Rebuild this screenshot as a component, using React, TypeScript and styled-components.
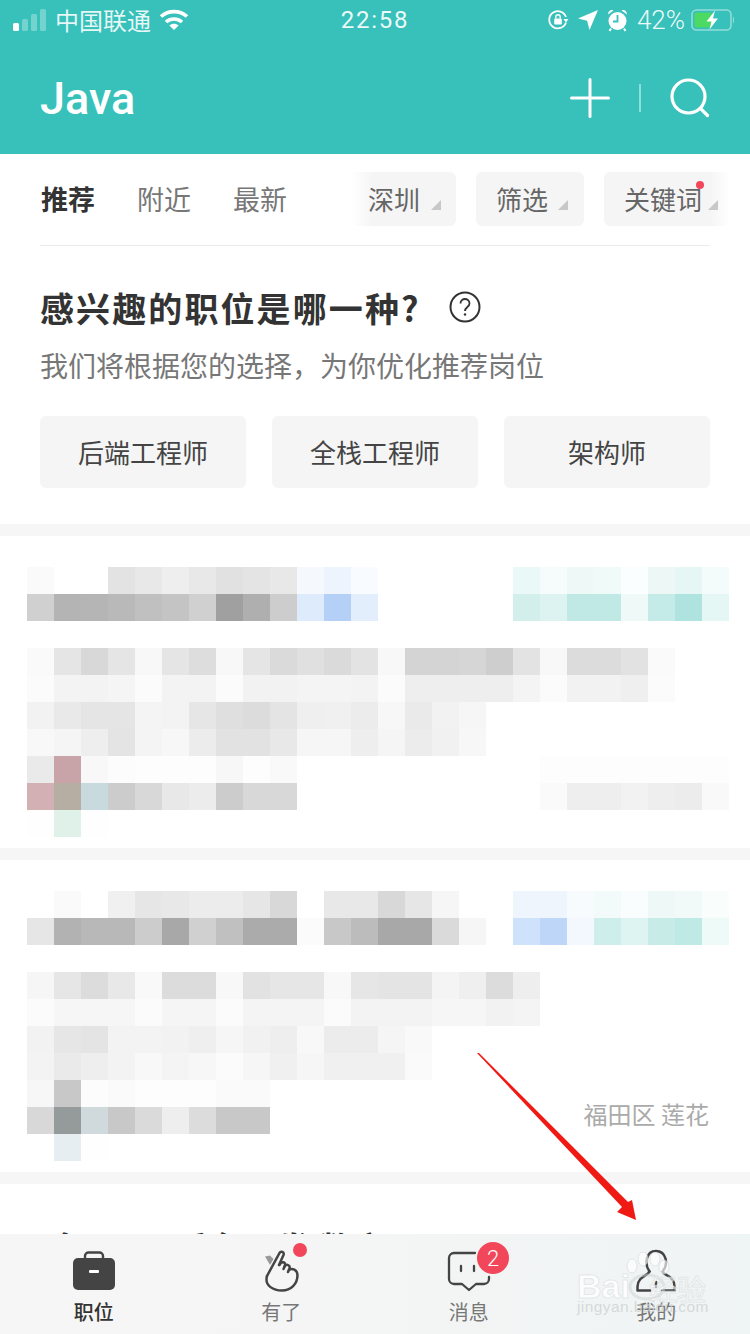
import styled, { createGlobalStyle } from "styled-components";

const GlobalStyle = createGlobalStyle`
  html, body {
    margin: 0;
    padding: 0;
    background: #fff;
  }
  * {
    box-sizing: border-box;
  }
`;

const Page = styled.div`
  position: relative;
  width: 750px;
  height: 1334px;
  overflow: hidden;
  background: #fff;
  font-family: "Noto Sans CJK SC", "Liberation Sans", sans-serif;
`;

const TopBlock = styled.header`
  height: 154px;
  background: #38c1ba;
  color: #fff;
`;

const StatusBar = styled.div`
  display: flex;
  align-items: center;
  justify-content: space-between;
  height: 40px;
  padding: 0 15px 0 13px;
`;

const StatusSide = styled.div<{ $gap: number; $end?: boolean }>`
  display: flex;
  align-items: center;
  flex: 1;
  gap: ${(p) => p.$gap}px;
  justify-content: ${(p) => (p.$end ? "flex-end" : "flex-start")};
`;

const Carrier = styled.span`
  font-size: 24px;
  line-height: 40px;
  color: rgba(255, 255, 255, 0.88);
`;

const Clock = styled.span`
  padding-left: 2px;
  font-family: "Roboto", sans-serif;
  font-size: 24px;
  letter-spacing: 1.8px;
  color: rgba(255, 255, 255, 0.92);
`;

const Percent = styled.span`
  margin-right: -3px;
  font-family: "Roboto", sans-serif;
  font-size: 26px;
  font-weight: 300;
  color: rgba(255, 255, 255, 0.92);
`;

const NavBar = styled.div`
  display: flex;
  align-items: center;
  justify-content: space-between;
  height: 114px;
  padding: 2px 40px 0 40px;
`;

const AppTitle = styled.h1`
  margin: 0;
  font-family: "Roboto", sans-serif;
  font-size: 45px;
  font-weight: 500;
`;

const NavActions = styled.div`
  display: flex;
  align-items: center;
  gap: 29px;
`;

const NavRule = styled.i`
  display: block;
  width: 2px;
  height: 28px;
  background: rgba(255, 255, 255, 0.45);
`;

const FilterRow = styled.div`
  display: flex;
  align-items: center;
  justify-content: space-between;
  height: 91px;
  padding: 0 20px 1px 41px;
`;

const TabGroup = styled.div`
  display: flex;
  gap: 42px;
  padding-bottom: 2px;
`;

const Tab = styled.span<{ $active?: boolean }>`
  font-size: 27px;
  font-weight: ${(p) => (p.$active ? 700 : 400)};
  color: ${(p) => (p.$active ? "#333" : "#777")};
`;

const ChipGroup = styled.div`
  display: flex;
  gap: 20px;
`;

const Chip = styled.div<{ $w: number; $fade?: "left" | "right" }>`
  position: relative;
  display: flex;
  align-items: center;
  width: ${(p) => p.$w}px;
  height: 54px;
  padding: 0 0 2px ${(p) => (p.$fade === "left" ? 17 : 20)}px;
  border-radius: 6px;
  font-size: 26px;
  color: #666;
  background: ${(p) =>
    p.$fade === "left"
      ? "linear-gradient(90deg, #fff 0, #f5f5f5 22px)"
      : p.$fade === "right"
        ? "linear-gradient(270deg, #fff 0, #f5f5f5 20px)"
        : "#f5f5f5"};
`;

const ChipArrow = styled.i<{ $right: number }>`
  position: absolute;
  right: ${(p) => p.$right}px;
  bottom: 16px;
  width: 10px;
  height: 10px;
  background: #c8c8c8;
  clip-path: polygon(100% 0, 100% 100%, 0 100%);
`;

const ChipDot = styled.i`
  position: absolute;
  top: 9px;
  right: 26px;
  width: 8px;
  height: 8px;
  border-radius: 50%;
  background: #f2475b;
`;

const Rule = styled.div`
  height: 1px;
  margin: 0 40px;
  background: #ececec;
`;

const Survey = styled.section`
  display: flex;
  flex-direction: column;
  height: 278px;
  padding: 36px 40px 0;
`;

const SurveyTitle = styled.h2`
  display: flex;
  align-items: center;
  gap: 28px;
  margin: 0;
  height: 50px;
  font-size: 34px;
  font-weight: 700;
  letter-spacing: 2.1px;
  color: #333;
`;

const SurveyHint = styled.p`
  margin: 11px 0 0;
  font-size: 28px;
  line-height: 44px;
  color: #777;
`;

const OptionRow = styled.div`
  display: grid;
  grid-template-columns: repeat(3, 206px);
  gap: 26px;
  margin-top: 29px;
`;

const OptionButton = styled.div`
  display: flex;
  align-items: center;
  justify-content: center;
  height: 72px;
  padding-bottom: 2px;
  border-radius: 6px;
  background: #f5f5f5;
  font-size: 26px;
  color: #444;
`;

const Gap = styled.div`
  height: 12px;
  background: #f6f6f6;
`;

const JobCard = styled.section`
  position: relative;
  height: 312px;
  padding: 31px 21px 0 27px;
`;

const Mosaic = styled.div`
  display: grid;
  grid-template-columns: repeat(26, 27px);
  grid-auto-rows: 27px;
`;

const Pixel = styled.i<{ $tone: string }>`
  display: block;
  background: ${(p) => p.$tone};
`;

const Place = styled.span`
  position: absolute;
  top: 238px;
  right: 41px;
  font-size: 24px;
  line-height: 32px;
  color: #aaa;
`;

const ClippedTitle = styled.div`
  display: flex;
  gap: 75px;
  padding: 39px 0 0 40px;
  font-size: 34px;
  font-weight: 700;
  line-height: 50px;
  color: #333;
  white-space: nowrap;
`;

const TabBar = styled.nav`
  position: absolute;
  left: 0;
  right: 0;
  bottom: 0;
  display: grid;
  grid-template-columns: repeat(4, 1fr);
  height: 100px;
  background: linear-gradient(90deg, #f6f6f6 0, #f5f5f5 40%, #eff4f4 100%);
`;

const TabItem = styled.div`
  position: relative;
  display: flex;
  flex-direction: column;
  align-items: center;
  padding-top: 13px;
`;

const TabIcon = styled.div`
  display: flex;
  align-items: center;
  justify-content: center;
  height: 48px;
`;

const TabLabel = styled.span<{ $active?: boolean }>`
  margin-top: 3px;
  font-size: 20px;
  line-height: 28px;
  font-weight: ${(p) => (p.$active ? 500 : 400)};
  color: ${(p) => (p.$active ? "#333" : "#777")};
`;

const RedDot = styled.i`
  position: absolute;
  top: 9px;
  left: 105px;
  width: 14px;
  height: 14px;
  border-radius: 50%;
  background: #f2475b;
`;

const CountBadge = styled.span`
  position: absolute;
  top: 8px;
  left: 102px;
  display: flex;
  align-items: center;
  justify-content: center;
  width: 32px;
  height: 32px;
  border-radius: 50%;
  background: #f2475b;
  font-family: "Roboto", sans-serif;
  font-size: 22px;
  font-weight: 300;
  color: #fff;
`;

const ArrowMark = styled.svg`
  position: absolute;
  left: 470px;
  top: 1045px;
`;

const Watermark = styled.div`
  position: absolute;
  left: 577px;
  top: 1250px;
  width: 140px;
  height: 70px;
`;

const WatermarkMain = styled.span`
  position: absolute;
  left: 0;
  top: 16px;
  font-family: "Liberation Sans", "Noto Sans CJK SC", sans-serif;
  font-size: 34px;
  font-weight: 700;
  line-height: 40px;
  color: rgba(255, 255, 255, 0.85);
  -webkit-text-stroke: 1px rgba(205, 210, 210, 0.45);
`;

const WatermarkCjk = styled.span`
  position: absolute;
  left: 72px;
  top: 20px;
  font-size: 29px;
  line-height: 36px;
  letter-spacing: -1px;
  color: rgba(255, 255, 255, 0.6);
  -webkit-text-stroke: 1px rgba(205, 210, 210, 0.45);
`;

const WatermarkUrl = styled.span`
  position: absolute;
  left: 0;
  top: 46px;
  font-family: "Liberation Sans", sans-serif;
  font-size: 15.5px;
  line-height: 22px;
  letter-spacing: 0.4px;
  white-space: nowrap;
  color: rgba(205, 210, 210, 0.8);
`;

const PawMark = styled.svg`
  position: absolute;
  left: 46px;
  top: 2px;
`;

const firstCard = [
  "fa - - e3 e8 ee e8 e1 e4 e8 f5f9fe eef4fe f8fbff - - - - - eaf8f8 f6fcfc edf8f7 f0faf9 fafefe ecf7f6 e6f6f4 f4fbfb",
  "d0 b4 b5 b9 c0 c4 d0 a0 af cd deebfd b5d0f6 e3eefd - - - - - d2efec dcf3f1 c0e9e6 c0e9e6 eef9f8 c5ebe8 aee3e0 e5f7f5",
  "- - - - - - - - - - - - - - - - - - - - - - - - - -",
  "fa e5 d8 e5 f8 e5 dd f8 e5 da e0 da e3 f8 d4 d4 d6 ce e3 f8 dc dc e2 fa - -",
  "fb f3 f3 f5 fb f3 f3 fb f2 f2 f4 f4 f3 fb ee ee ee ee f4 fb f2 f2 ef fb - -",
  "f2 e9 e5 e5 f4 f3 e6 df dc e4 ef f0 ec f7 ea f2 f6 - - - - - - - - -",
  "f8 f5 ee e4 f4 f7 ec e2 e2 e8 f6 f6 ee f5 ec f1 f7 - - - - - - - - -",
  "ea c8a4a8 f8 fc fd fd fd f7 fd f9 - - - - - - - - - fd fd fd fd fd fd fd",
  "d2b0b3 b7aea3 c8dadd cc d8 e8 ec cc d8 d8 - - - - - - - - - fa ee ee f2 ee ec f9",
  "fe e0f1ea fe - - - - - - - - - - - - - - - - - - - - - - -",
];

const secondCard = [
  "- fa - f0 e6 e8 ec ec e6 d8 - e8 e8 d8 e6 f6 - - eef5fc eef5fd f8fbfe f2fafa fafdfd eef8f7 f2faf9 f9fdfc",
  "e6 b2 b8 b8 cc a8 d0 c0 ab ab fb c8 bc a8 a8 da f6 - cfe2fb bed7f9 f3f8fe cdeeea def4f2 c7ebe7 bfe9e5 eefaf8",
  "- - - - - - - - - - - - - - - - - - - - - - - - - -",
  "f6 e6 dc e8 f9 dc dc f8 e2 e6 e6 f8 e6 e4 e4 f4 ef dc ee - - - - - - -",
  "fb f6 f6 f6 fb f5 f5 fb f4 f4 f4 fb f3 f3 f3 f6 f6 f2 f4 - - - - - - -",
  "f2 e6 e4 f3 f3 f2 ef f6 f1 ee f8 ec ec f5 f9 - - - - - - - - - - -",
  "f3 ea ee f3 f8 f4 f7 fb f6 f0 f6 f0 f0 f0 fa - - - - - - - - - - -",
  "f7 c8 fc fa fd fd fd fa fa - - - - - - - - - - - - - - - - -",
  "d8 959a9a d0dadc c8 da ee dc c8 c8 - - - - - - - - - - - - - - - - -",
  "- e6eef2 fe - - - - - - - - - - - - - - - - - - - - - - -",
];

// "-" is blank, two digits a gray, six digits a full colour
const toTone = (code: string) => {
  if (code === "-") return "#fff";
  if (code.length === 2) return `#${code}${code}${code}`;
  return `#${code}`;
};

const BlurredRows = ({ rows }: { rows: string[] }) => (
  <Mosaic>
    {rows.flatMap((row, r) =>
      row.split(" ").map((code, c) => <Pixel key={`${r}-${c}`} $tone={toTone(code)} />)
    )}
  </Mosaic>
);

const SignalIcon = () => (
  <svg width="34" height="24" viewBox="0 0 34 24">
    <rect x="0" y="15" width="6" height="8" rx="1.5" fill="#fff" />
    <rect x="9" y="11" width="6" height="12" rx="1.5" fill="#fff" opacity="0.3" />
    <rect x="18" y="6" width="6" height="17" rx="1.5" fill="#fff" opacity="0.3" />
    <rect x="27" y="1" width="6" height="22" rx="1.5" fill="#fff" opacity="0.3" />
  </svg>
);

const WifiIcon = () => (
  <svg width="30" height="22" viewBox="0 0 30 22" fill="none" stroke="#fff" strokeWidth="3.6">
    <path d="M2 7.5C9.5 1 20.5 1 28 7.5" />
    <path d="M7 13C11.5 9 18.5 9 23 13" />
    <path d="M15 21l-4.6-4.6c2.6-2.2 6.6-2.2 9.2 0z" fill="#fff" stroke="none" />
  </svg>
);

const RotationLockIcon = () => (
  <svg width="22" height="22" viewBox="0 0 22 22" fill="none">
    <path d="M19 13.5A8.6 8.6 0 1 1 19 8" stroke="#fff" strokeWidth="1.8" />
    <path d="M16.5 10h5l-2.5 3.4z" fill="#fff" />
    <rect x="7.2" y="9.5" width="7.6" height="6" rx="1" fill="#fff" />
    <path d="M8.8 9.5V8a2.2 2.2 0 0 1 4.4 0v1.5" stroke="#fff" strokeWidth="1.4" />
  </svg>
);

const LocationIcon = () => (
  <svg width="20" height="20" viewBox="0 0 20 20">
    <path d="M20 0L11.5 20l-2.4-9.2L0 8.5z" fill="#fff" />
  </svg>
);

const AlarmIcon = () => (
  <svg width="21" height="24" viewBox="0 0 21 24">
    <path d="M1 6.5C1 3 4 1 6.5 2.5zM20 6.5C20 3 17 1 14.5 2.5z" fill="#fff" />
    <circle cx="10.5" cy="13" r="9" fill="#fff" />
    <path d="M10.5 7v6.5H6" fill="none" stroke="#38c1ba" strokeWidth="1.8" />
    <path d="M4 20.5L2.5 23M17 20.5L18.5 23" stroke="#fff" strokeWidth="2" />
  </svg>
);

const BatteryIcon = () => (
  <svg width="44" height="22" viewBox="0 0 44 22">
    <rect x="1" y="1" width="39" height="20" rx="4.5" fill="none" stroke="#fff" strokeOpacity="0.45" strokeWidth="1.6" />
    <path d="M42 7.5c1.3.5 1.3 6.5 0 7z" fill="#fff" opacity="0.5" />
    <rect x="3.5" y="3.5" width="17" height="15" rx="2" fill="#4cd964" />
    <path d="M24 1.5L15.5 12.5h5l-2 8L27 9.5h-5z" fill="#fff" />
  </svg>
);

const PlusIcon = () => (
  <svg width="40" height="40" viewBox="0 0 40 40" stroke="#fff" strokeWidth="3" strokeLinecap="round">
    <path d="M20 1.5v37M1.5 20h37" />
  </svg>
);

const SearchIcon = () => (
  <svg width="40" height="40" viewBox="0 0 40 40" fill="none" stroke="#fff" strokeWidth="3.2" strokeLinecap="round">
    <circle cx="18.5" cy="18.5" r="16.5" />
    <path d="M30.5 30.5l7 7" />
  </svg>
);

const HelpIcon = () => (
  <svg width="32" height="32" viewBox="0 0 32 32" fill="none" stroke="#333" strokeWidth="2">
    <circle cx="16" cy="16" r="14.5" />
    <path d="M11.5 12.5c0-6 9-6 9 0 0 3.5-4.5 3.5-4.5 7.5" strokeWidth="1.8" />
    <circle cx="16" cy="23.5" r="1.2" fill="#333" stroke="none" />
  </svg>
);

const BriefcaseIcon = () => (
  <svg width="44" height="40" viewBox="0 0 44 40">
    <path d="M13 8V5a3.5 3.5 0 0 1 3.5-3.5h11A3.5 3.5 0 0 1 31 5v3" fill="none" stroke="#444" strokeWidth="2.4" />
    <rect x="1" y="7" width="42" height="32" rx="5" fill="#444" />
    <rect x="17" y="19" width="10" height="3" rx="1" fill="#fff" />
  </svg>
);

const HandIcon = () => (
  <svg width="38" height="44" viewBox="0 0 38 44" fill="none" stroke="#444" strokeWidth="2.5" strokeLinecap="round" strokeLinejoin="round">
    <path d="M3 7.5L8 16 11.5 10 8 6.5z" fill="#999" stroke="none" />
    <path d="M5 27L17.5 4C19 1.5 22.5 3 21.5 6L17 16" />
    <path d="M17.5 16C19.5 11.5 24 13 23 16.5L21.5 20" />
    <path d="M22.5 17.5C24.5 14.5 28.5 16 27.5 19.5L26 23" />
    <path d="M27 21C30 18.5 35.5 21 35.5 26C35.5 35 29 41.5 20 41.5C10 41.5 4.5 36 4.5 31C4.5 29.5 4.5 28 5 27" />
  </svg>
);

const ChatIcon = () => (
  <svg width="44" height="42" viewBox="0 0 44 42" fill="none" stroke="#444" strokeWidth="2.3" strokeLinecap="round" strokeLinejoin="round">
    <path d="M28 3H7a5 5 0 0 0-5 5v21a5 5 0 0 0 5 5h8l7 6 7-6h8a5 5 0 0 0 5-5v-2" />
    <path d="M14 16v5M27 16v5" />
  </svg>
);

const UserIcon = () => (
  <svg width="40" height="44" viewBox="0 0 40 44" fill="none" stroke="#444" strokeWidth="2.5" strokeLinecap="round" strokeLinejoin="round">
    <path d="M13.5 22.5C8 15 10 2 20 2C30 2 33 15 26.5 22.5C28 27 38 26 38.5 37.5V41.5H26" />
    <path d="M13.5 22.5C12 27 2 27 1.5 37.5V41.5H14" />
    <path d="M20 33v5" />
  </svg>
);

export default function App() {
  return (
    <Page>
      <GlobalStyle />
      <TopBlock>
        <StatusBar>
          <StatusSide $gap={8}>
            <SignalIcon />
            <Carrier>中国联通</Carrier>
            <WifiIcon />
          </StatusSide>
          <Clock>22:58</Clock>
          <StatusSide $gap={9} $end>
            <RotationLockIcon />
            <LocationIcon />
            <AlarmIcon />
            <Percent>42%</Percent>
            <BatteryIcon />
          </StatusSide>
        </StatusBar>
        <NavBar>
          <AppTitle>Java</AppTitle>
          <NavActions>
            <PlusIcon />
            <NavRule />
            <SearchIcon />
          </NavActions>
        </NavBar>
      </TopBlock>

      <FilterRow>
        <TabGroup>
          <Tab $active>推荐</Tab>
          <Tab>附近</Tab>
          <Tab>最新</Tab>
        </TabGroup>
        <ChipGroup>
          <Chip $w={105} $fade="left">
            深圳
            <ChipArrow $right={15} />
          </Chip>
          <Chip $w={108}>
            筛选
            <ChipArrow $right={16} />
          </Chip>
          <Chip $w={126} $fade="right">
            关键词
            <ChipDot />
            <ChipArrow $right={12} />
          </Chip>
        </ChipGroup>
      </FilterRow>
      <Rule />

      <Survey>
        <SurveyTitle>
          感兴趣的职位是哪一种?
          <HelpIcon />
        </SurveyTitle>
        <SurveyHint>我们将根据您的选择，为你优化推荐岗位</SurveyHint>
        <OptionRow>
          <OptionButton>后端工程师</OptionButton>
          <OptionButton>全栈工程师</OptionButton>
          <OptionButton>架构师</OptionButton>
        </OptionRow>
      </Survey>
      <Gap />

      <JobCard>
        <BlurredRows rows={firstCard} />
      </JobCard>
      <Gap />
      <JobCard>
        <BlurredRows rows={secondCard} />
        <Place>福田区 莲花</Place>
      </JobCard>
      <Gap />
      <ClippedTitle>
        <span>[急]</span>
        <span>后台开发 数字</span>
      </ClippedTitle>

      <TabBar>
        <TabItem>
          <TabIcon>
            <BriefcaseIcon />
          </TabIcon>
          <TabLabel $active>职位</TabLabel>
        </TabItem>
        <TabItem>
          <TabIcon>
            <HandIcon />
          </TabIcon>
          <TabLabel>有了</TabLabel>
          <RedDot />
        </TabItem>
        <TabItem>
          <TabIcon>
            <ChatIcon />
          </TabIcon>
          <TabLabel>消息</TabLabel>
          <CountBadge>2</CountBadge>
        </TabItem>
        <TabItem>
          <TabIcon>
            <UserIcon />
          </TabIcon>
          <TabLabel>我的</TabLabel>
        </TabItem>
      </TabBar>

      <Watermark>
        <PawMark width="50" height="50" viewBox="0 0 50 50" fill="rgba(255,255,255,0.65)" stroke="rgba(205,210,210,0.5)">
          <ellipse cx="9" cy="14" rx="5" ry="7" />
          <ellipse cx="20" cy="7" rx="5" ry="7" />
          <ellipse cx="32" cy="7" rx="5" ry="7" />
          <ellipse cx="41" cy="15" rx="5" ry="7" />
          <ellipse cx="24" cy="35" rx="17" ry="12" fill="none" strokeWidth="3" />
        </PawMark>
        <WatermarkMain>Bai</WatermarkMain>
        <WatermarkCjk>经验</WatermarkCjk>
        <WatermarkUrl>jingyan.baidu.com</WatermarkUrl>
      </Watermark>

      <ArrowMark width="175" height="185" viewBox="0 0 175 185">
        <polygon points="7,8 9,8 158,157 162,155 166,175 147,167 152,162" fill="#f01a14" />
      </ArrowMark>
    </Page>
  );
}
